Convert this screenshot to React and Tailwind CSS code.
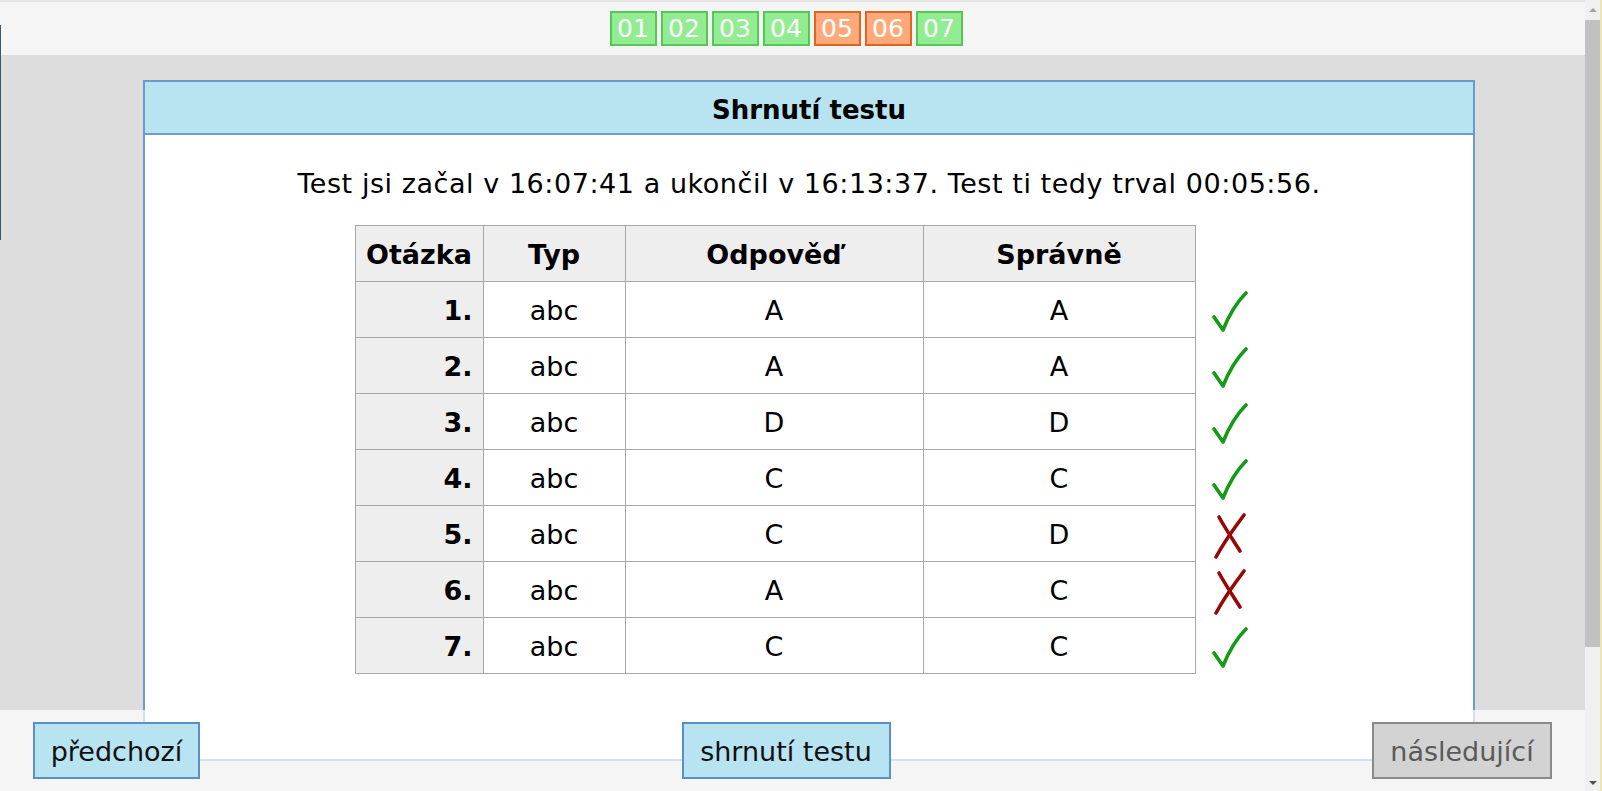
import React from "react";

const rows = [
  { n: "1.", typ: "abc", odp: "A", spr: "A", ok: true },
  { n: "2.", typ: "abc", odp: "A", spr: "A", ok: true },
  { n: "3.", typ: "abc", odp: "D", spr: "D", ok: true },
  { n: "4.", typ: "abc", odp: "C", spr: "C", ok: true },
  { n: "5.", typ: "abc", odp: "C", spr: "D", ok: false },
  { n: "6.", typ: "abc", odp: "A", spr: "C", ok: false },
  { n: "7.", typ: "abc", odp: "C", spr: "C", ok: true },
];

const pages = [
  { t: "01", ok: true },
  { t: "02", ok: true },
  { t: "03", ok: true },
  { t: "04", ok: true },
  { t: "05", ok: false },
  { t: "06", ok: false },
  { t: "07", ok: true },
];

function Check() {
  return (
    <svg width="36" height="42" viewBox="0 0 36 42">
      <path
        d="M2 26 L11 39 C17 24 24 12 34 2"
        fill="none"
        stroke="#149a14"
        strokeWidth="3.6"
        strokeLinecap="round"
        strokeLinejoin="round"
      />
    </svg>
  );
}

function Cross() {
  return (
    <svg width="32" height="46" viewBox="0 0 32 46">
      <path
        d="M5 4 C11 15 19 27 26 38"
        fill="none"
        stroke="#980606"
        strokeWidth="3.6"
        strokeLinecap="round"
      />
      <path
        d="M30 2 C21 14 10 29 2 44"
        fill="none"
        stroke="#980606"
        strokeWidth="3.6"
        strokeLinecap="round"
      />
    </svg>
  );
}

export default function App() {
  const cell = "h-[56px] border-r border-b border-[#a8a8a8] flex items-center justify-center pt-[4px]";
  return (
    <div
      className="relative w-[1602px] h-[791px] overflow-hidden flex text-black"
      style={{ fontFamily: '"DejaVu Sans", Verdana, sans-serif' }}
    >
      <div className="absolute left-0 top-[25px] w-px h-[215px] bg-[#3a5573]" />
      <div className="w-[1585px] h-full flex flex-col bg-[#dddddd]">
        {/* top bar */}
        <div className="h-[55px] bg-[#f5f5f5] border-t-2 border-[#e6e6e6] flex justify-center pr-[13px] pt-[9px] gap-[4px]">
          {pages.map((p) => (
            <div
              key={p.t}
              className={
                p.ok
                  ? "w-[47px] h-[35px] border-2 border-[#57c657] bg-[#92ec92] text-white text-[25px] leading-[32px] text-center"
                  : "w-[47px] h-[35px] border-2 border-[#e0651f] bg-[#ffa97a] text-white text-[25px] leading-[32px] text-center"
              }
            >
              {p.t}
            </div>
          ))}
        </div>
        {/* main */}
        <div className="pt-[25px] pl-[143px]">
          <div className="w-[1332px] h-[681px] border-2 border-[#6a9ad0] bg-white flex flex-col">
            <div className="h-[53px] bg-[#b8e3f1] border-b-2 border-[#6a9ad0] flex items-center justify-center pt-[5px] text-[26px] font-bold">
              Shrnutí testu
            </div>
            <div className="pt-[33px] text-center text-[27px] leading-[32px] tracking-[0.55px]">
              Test jsi začal v 16:07:41 a ukončil v 16:13:37. Test ti tedy trval 00:05:56.
            </div>
            <div className="mt-[25px] flex justify-center text-[27px]">
              <div className="grid grid-cols-[128px_142px_298px_272px] border-l border-t border-[#a8a8a8]">
                <div className={cell + " bg-[#eeeeee] font-bold"}>Otázka</div>
                <div className={cell + " bg-[#eeeeee] font-bold"}>Typ</div>
                <div className={cell + " bg-[#eeeeee] font-bold"}>Odpověď</div>
                <div className={cell + " bg-[#eeeeee] font-bold"}>Správně</div>
                {rows.map((r) => (
                  <React.Fragment key={r.n}>
                    <div className="h-[56px] border-r border-b border-[#a8a8a8] bg-[#eeeeee] font-bold flex items-center justify-end pr-[10px] pt-[4px]">
                      {r.n}
                    </div>
                    <div className={cell}>{r.typ}</div>
                    <div className={cell}>{r.odp}</div>
                    <div className={cell}>{r.spr}</div>
                  </React.Fragment>
                ))}
              </div>
              <div className="w-[68px] flex flex-col pt-[57px]">
                {rows.map((r) => (
                  <div key={r.n} className="h-[56px] flex items-center justify-center pt-[4px]">
                    {r.ok ? <Check /> : <Cross />}
                  </div>
                ))}
              </div>
            </div>
          </div>
        </div>
      </div>
      {/* scrollbar */}
      <div className="w-[15px] h-full bg-[#f0f0f0] flex flex-col">
        <div className="h-[20px] flex items-center justify-center">
          <div className="w-0 h-0 border-l-[4px] border-r-[4px] border-b-[4px] border-l-transparent border-r-transparent border-b-[#a3a3a3]" />
        </div>
        <div className="h-[627px] bg-[#c1c1c1]" />
        <div className="flex-1" />
        <div className="h-[16px] flex items-center justify-center">
          <div className="w-0 h-0 border-l-[4px] border-r-[4px] border-t-[4px] border-l-transparent border-r-transparent border-t-[#505050]" />
        </div>
      </div>
      <div className="w-[2px] h-full bg-[#efe4b4]" />
      {/* footer */}
      <div className="absolute left-0 bottom-0 w-[1585px] h-[81px] bg-white/70 flex justify-between items-start pt-[12px] px-[33px] text-[27px]">
        <div className="w-[167px] h-[57px] border-2 border-[#5b8fc6] bg-[#b8e3f1] flex items-center justify-center pt-[4px] text-[#111]">
          předchozí
        </div>
        <div className="w-[209px] h-[57px] border-2 border-[#5b8fc6] bg-[#b8e3f1] flex items-center justify-center pt-[4px] text-[#111]">
          shrnutí testu
        </div>
        <div className="w-[180px] h-[57px] border-2 border-[#8a8a8a] bg-[#d3d3d3] flex items-center justify-center pt-[4px] text-[#5a5a5a]">
          následující
        </div>
      </div>
    </div>
  );
}
